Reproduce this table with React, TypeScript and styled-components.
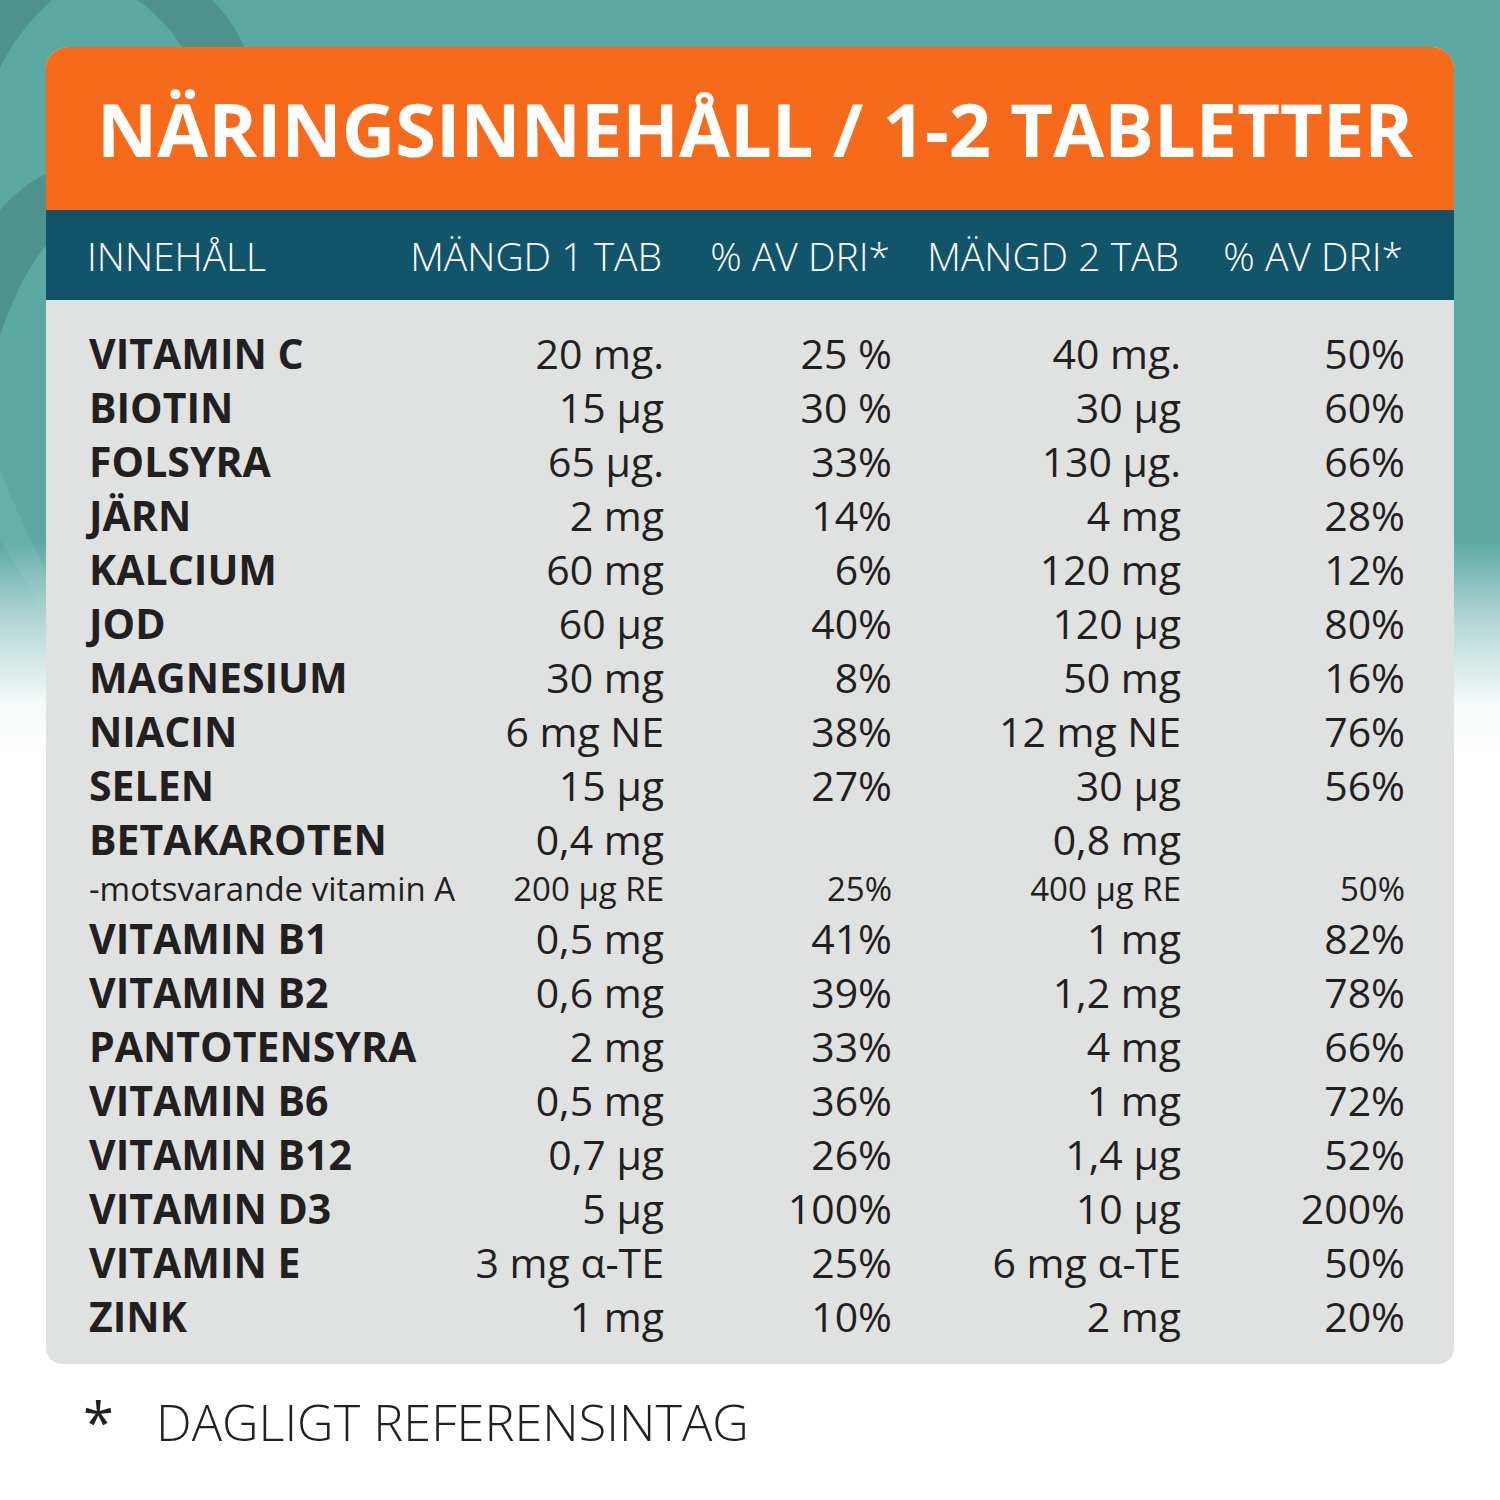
import styled, {createGlobalStyle} from 'styled-components';

const GlobalStyle = createGlobalStyle`
    html, body {
        margin: 0;
        padding: 0;
    }
    body {
        font-family: "Open Sans", "Noto Sans", sans-serif;
        color: #231f20;
    }
`;

const Page = styled.div`
    position: relative;
    width: 1500px;
    height: 1500px;
    box-sizing: border-box;
    padding: 47px 46px 0;
    background: #ffffff;
    overflow: hidden;
`;

// decorative swirl behind the card
const Backdrop = styled.svg`
    position: absolute;
    top: 0;
    left: 0;
    z-index: 0;
`;

const Card = styled.div`
    position: relative;
    z-index: 1;
    border-radius: 22px 22px 16px 16px;
    overflow: hidden;
    background: #e0e1e1;
`;

const TitleBar = styled.div`
    height: 163px;
    background: #f56b1b;
    display: flex;
    align-items: center;
    padding-left: 51px;
`;

const Title = styled.h1`
    margin: 0;
    color: #ffffff;
    font-size: 74px;
    font-weight: 700;
    line-height: 1;
    white-space: nowrap;
`;

const gridCols = '373px 202px 228px 289px 224px';

const HeadRow = styled.div`
    height: 90px;
    background: #12546a;
    display: grid;
    grid-template-columns: ${gridCols};
    align-items: center;
    padding: 0 51px 0 41px;
    color: #ffffff;
    font-size: 39px;
    font-weight: 300;
`;

const HeadCell = styled.div<{left?: boolean}>`
    display: flex;
    justify-content: ${(p) => (p.left ? 'flex-start' : 'flex-end')};
    white-space: nowrap;
`;

const Body = styled.div`
    padding: 26px 51px 21px 43px;
`;

const Row = styled.div<{sub?: boolean}>`
    display: grid;
    grid-template-columns: ${gridCols};
    align-items: center;
    height: ${(p) => (p.sub ? '45px' : '54px')};
    line-height: ${(p) => (p.sub ? '45px' : '54px')};
    font-size: ${(p) => (p.sub ? '33px' : '41px')};
    font-weight: 400;
`;

const Name = styled.div<{sub?: boolean}>`
    font-weight: ${(p) => (p.sub ? 400 : 700)};
    white-space: nowrap;
`;

const Value = styled.div`
    display: flex;
    justify-content: flex-end;
    white-space: nowrap;
`;

const Footnote = styled.div`
    position: relative;
    z-index: 1;
    display: flex;
    align-items: center;
    height: 114px;
    padding-left: 37px;
    font-size: 50.5px;
    font-weight: 300;
    color: #231f20;
`;

const Star = styled.span`
    width: 73px;
    font-size: 56px;
    font-weight: 400;
`;

type Nutrient = {
    name: string;
    one: string;
    dri1: string;
    two: string;
    dri2: string;
    sub?: boolean;
};

const rows: Nutrient[] = [
    {name: 'VITAMIN C', one: '20 mg.', dri1: '25 %', two: '40 mg.', dri2: '50%'},
    {name: 'BIOTIN', one: '15 µg', dri1: '30 %', two: '30 µg', dri2: '60%'},
    {name: 'FOLSYRA', one: '65 µg.', dri1: '33%', two: '130 µg.', dri2: '66%'},
    {name: 'JÄRN', one: '2 mg', dri1: '14%', two: '4 mg', dri2: '28%'},
    {name: 'KALCIUM', one: '60 mg', dri1: '6%', two: '120 mg', dri2: '12%'},
    {name: 'JOD', one: '60 µg', dri1: '40%', two: '120 µg', dri2: '80%'},
    {name: 'MAGNESIUM', one: '30 mg', dri1: '8%', two: '50 mg', dri2: '16%'},
    {name: 'NIACIN', one: '6 mg NE', dri1: '38%', two: '12 mg NE', dri2: '76%'},
    {name: 'SELEN', one: '15 µg', dri1: '27%', two: '30 µg', dri2: '56%'},
    {name: 'BETAKAROTEN', one: '0,4 mg', dri1: '', two: '0,8 mg', dri2: ''},
    {name: '-motsvarande vitamin A', one: '200 µg RE', dri1: '25%', two: '400 µg RE', dri2: '50%', sub: true},
    {name: 'VITAMIN B1', one: '0,5 mg', dri1: '41%', two: '1 mg', dri2: '82%'},
    {name: 'VITAMIN B2', one: '0,6 mg', dri1: '39%', two: '1,2 mg', dri2: '78%'},
    {name: 'PANTOTENSYRA', one: '2 mg', dri1: '33%', two: '4 mg', dri2: '66%'},
    {name: 'VITAMIN B6', one: '0,5 mg', dri1: '36%', two: '1 mg', dri2: '72%'},
    {name: 'VITAMIN B12', one: '0,7 µg', dri1: '26%', two: '1,4 µg', dri2: '52%'},
    {name: 'VITAMIN D3', one: '5 µg', dri1: '100%', two: '10 µg', dri2: '200%'},
    {name: 'VITAMIN E', one: '3 mg α-TE', dri1: '25%', two: '6 mg α-TE', dri2: '50%'},
    {name: 'ZINK', one: '1 mg', dri1: '10%', two: '2 mg', dri2: '20%'},
];

function Swirl() {
    return (
        <Backdrop width="1500" height="820" viewBox="0 0 1500 820">
            <defs>
                <linearGradient id="fade" x1="0" y1="0" x2="0" y2="1">
                    <stop offset="0.66" stopColor="#ffffff" stopOpacity="0" />
                    <stop offset="0.76" stopColor="#ffffff" stopOpacity="0.55" />
                    <stop offset="0.86" stopColor="#ffffff" stopOpacity="0.95" />
                    <stop offset="0.92" stopColor="#ffffff" stopOpacity="1" />
                </linearGradient>
            </defs>
            <rect width="1500" height="820" fill="#5ca9a3" />
            <path d="M0,0 H52 C32,18 12,42 0,68 Z" fill="#4f918c" />
            <path d="M137,0 H212 C228,16 240,34 250,60 H190 C175,34 158,14 137,0 Z" fill="#4f918c" />
            <path d="M0,210 C18,190 34,178 60,168 V232 C36,250 16,290 0,335 Z" fill="#4f918c" />
            <path d="M0,470 C20,520 40,560 60,600 V640 C36,600 14,560 0,540 Z" fill="#6cb3ad" opacity="0.6" />
            <rect width="1500" height="820" fill="url(#fade)" />
        </Backdrop>
    );
}

export default function App() {
    return (
        <Page>
            <GlobalStyle />
            <Swirl />
            <Card>
                <TitleBar>
                    <Title>NÄRINGSINNEHÅLL / 1-2 TABLETTER</Title>
                </TitleBar>
                <HeadRow>
                    <HeadCell left>INNEHÅLL</HeadCell>
                    <HeadCell>MÄNGD 1 TAB</HeadCell>
                    <HeadCell>% AV DRI*</HeadCell>
                    <HeadCell>MÄNGD 2 TAB</HeadCell>
                    <HeadCell>% AV DRI*</HeadCell>
                </HeadRow>
                <Body>
                    {rows.map((r) => (
                        <Row key={r.name} sub={r.sub}>
                            <Name sub={r.sub}>{r.name}</Name>
                            <Value>{r.one}</Value>
                            <Value>{r.dri1}</Value>
                            <Value>{r.two}</Value>
                            <Value>{r.dri2}</Value>
                        </Row>
                    ))}
                </Body>
            </Card>
            <Footnote>
                <Star>*</Star>
                DAGLIGT REFERENSINTAG
            </Footnote>
        </Page>
    );
}
